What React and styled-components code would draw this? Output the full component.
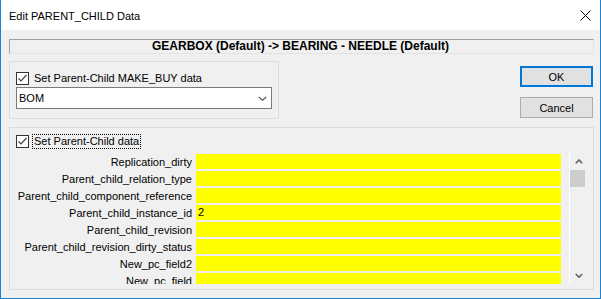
import styled, { createGlobalStyle } from "styled-components";

const GlobalStyle = createGlobalStyle`
  body {
    margin: 0;
    background: #f0f0f0;
  }
`;

const Window = styled.div`
  width: 601px;
  height: 299px;
  box-sizing: border-box;
  border: 1px solid #1883d7;
  border-top: none;
  background: #f0f0f0;
  display: flex;
  flex-direction: column;
  font-family: "Liberation Sans", Arial, sans-serif;
  font-size: 11px;
  color: #000;
  overflow: hidden;
`;

const TitleBar = styled.div`
  height: 30px;
  flex-shrink: 0;
  background: #fff;
  display: flex;
  align-items: center;
  justify-content: space-between;
  padding: 1px 9px 0 8px;
  box-sizing: border-box;
  font-size: 11px;
`;

const Body = styled.div`
  padding: 0 6px 0 8px;
  display: flex;
  flex-direction: column;
`;

const HeaderBox = styled.div`
  margin-top: 9px;
  height: 15px;
  box-sizing: border-box;
  border-top: 1px solid #a0a0a0;
  border-left: 1px solid #a0a0a0;
  border-bottom: 1px solid #e3e3e3;
  border-right: 1px solid #e3e3e3;
  font-weight: bold;
  font-size: 12px;
  text-align: center;
  line-height: 13px;
  padding-right: 2px;
`;

const TopRow = styled.div`
  margin-top: 7px;
  display: flex;
`;

const GroupBox = styled.div`
  width: ${(p) => p.$width}px;
  height: ${(p) => p.$height}px;
  box-sizing: border-box;
  border: 1px solid #dcdcdc;
  padding: ${(p) => p.$padTop}px 0 0 6px;
  display: flex;
  flex-direction: column;
`;

const CheckRow = styled.label`
  display: flex;
  align-items: center;
  gap: 3px;
  height: ${(p) => p.$height}px;
`;

const CheckLabel = styled.span`
  padding: 0 1px;
  line-height: 13px;
  border: 1px ${(p) => (p.$focused ? "dotted #000" : "solid transparent")};
`;

const Combo = styled.div`
  margin-top: 2px;
  width: 256px;
  height: 22px;
  box-sizing: border-box;
  border: 1px solid #7a7a7a;
  background: #fff;
  display: flex;
  align-items: center;
  justify-content: space-between;
  padding: 0 4px 0 2px;
`;

const ButtonColumn = styled.div`
  margin-left: auto;
  margin-right: 1px;
  padding-top: 5px;
  display: flex;
  flex-direction: column;
  gap: 10px;
`;

const Button = styled.button`
  width: 73px;
  height: 21px;
  box-sizing: border-box;
  background: #e1e1e1;
  border: ${(p) => (p.$default ? "2px solid #0078d7" : "1px solid #adadad")};
  font-family: inherit;
  font-size: 11px;
  color: #000;
  padding: 0;
`;

const SecondGroup = styled(GroupBox)`
  margin-top: 8px;
`;

const ListArea = styled.div`
  margin-top: 4px;
  height: 131px;
  display: flex;
`;

const Fields = styled.div`
  width: 551px;
  overflow: hidden;
  margin-left: -6px;
`;

const Row = styled.div`
  height: 17px;
  display: flex;
  align-items: center;
`;

const FieldLabel = styled.div`
  width: 186px;
  text-align: right;
  padding-right: 4px;
  box-sizing: border-box;
  white-space: nowrap;
`;

const FieldValue = styled.div`
  width: 365px;
  height: 15px;
  background: #ffff00;
  line-height: 15px;
  padding-left: 2px;
  box-sizing: border-box;
`;

const ScrollBar = styled.div`
  margin-left: 8px;
  width: 18px;
  box-sizing: border-box;
  border-left: 1px solid #fff;
  display: flex;
  flex-direction: column;
`;

const ScrollButton = styled.div`
  height: 17px;
  display: flex;
  align-items: center;
  justify-content: center;
`;

const Thumb = styled.div`
  height: 17px;
  width: 15px;
  background: #cdcdcd;
`;

const ScrollTrack = styled.div`
  flex: 1;
`;

function CheckBox() {
  return (
    <svg width="13" height="13" viewBox="0 0 13 13">
      <rect x="0.5" y="0.5" width="12" height="12" fill="#fff" stroke="#333" />
      <polyline
        points="2.5,6.5 5,9 10.5,3"
        fill="none"
        stroke="#444"
        strokeWidth="1.2"
      />
    </svg>
  );
}

function Chevron({ up, color = "#606060", width = 8, height = 5, stroke = 1.6 }) {
  const pts = up
    ? `0.8,${height - 0.8} ${width / 2},1 ${width - 0.8},${height - 0.8}`
    : `0.8,1 ${width / 2},${height - 0.8} ${width - 0.8},1`;
  return (
    <svg width={width} height={height} viewBox={`0 0 ${width} ${height}`}>
      <polyline points={pts} fill="none" stroke={color} strokeWidth={stroke} />
    </svg>
  );
}

const rows = [
  ["Replication_dirty", ""],
  ["Parent_child_relation_type", ""],
  ["Parent_child_component_reference", ""],
  ["Parent_child_instance_id", "2"],
  ["Parent_child_revision", ""],
  ["Parent_child_revision_dirty_status", ""],
  ["New_pc_field2", ""],
  ["New_pc_field", ""],
];

export default function App() {
  return (
    <>
      <GlobalStyle />
      <Window>
        <TitleBar>
          <span>Edit PARENT_CHILD Data</span>
          <svg width="11" height="11" viewBox="0 0 11 11">
            <path d="M0.5 0.5 L10.5 10.5 M10.5 0.5 L0.5 10.5" stroke="#000" strokeWidth="1" />
          </svg>
        </TitleBar>
        <Body>
          <HeaderBox>GEARBOX (Default) -&gt; BEARING - NEEDLE (Default)</HeaderBox>
          <TopRow>
            <GroupBox $width={270} $height={58} $padTop={10}>
              <CheckRow $height={13}>
                <CheckBox />
                <CheckLabel>Set Parent-Child MAKE_BUY data</CheckLabel>
              </CheckRow>
              <Combo>
                <span>BOM</span>
                <Chevron width={9} height={5} color="#555" stroke={1.1} />
              </Combo>
            </GroupBox>
            <ButtonColumn>
              <Button $default>OK</Button>
              <Button>Cancel</Button>
            </ButtonColumn>
          </TopRow>
          <SecondGroup $width={585} $height={163} $padTop={6}>
            <CheckRow $height={15}>
              <CheckBox />
              <CheckLabel $focused>Set Parent-Child data</CheckLabel>
            </CheckRow>
            <ListArea>
              <Fields>
                {rows.map(([label, value]) => (
                  <Row key={label}>
                    <FieldLabel>{label}</FieldLabel>
                    <FieldValue>{value}</FieldValue>
                  </Row>
                ))}
              </Fields>
              <ScrollBar>
                <ScrollButton>
                  <Chevron up width={8} height={5} />
                </ScrollButton>
                <Thumb />
                <ScrollTrack />
                <ScrollButton>
                  <Chevron width={8} height={5} />
                </ScrollButton>
              </ScrollBar>
            </ListArea>
          </SecondGroup>
        </Body>
      </Window>
    </>
  );
}
